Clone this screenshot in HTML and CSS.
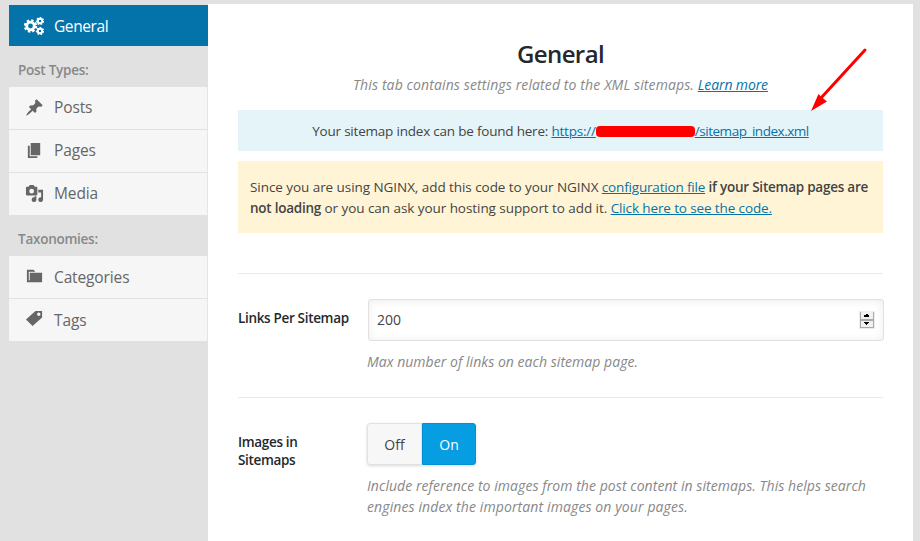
FILE: index.html
```html
<!DOCTYPE html>
<html lang="en">
<head>
<meta charset="utf-8">
<title>Sitemap Settings</title>
<link rel="stylesheet" href="styles.css">
</head>
<body>
<div class="app">
  <nav class="sidebar">
    <a class="tab active">
      <svg class="icon gears" viewBox="0 0 20 18" width="20" height="18" fill="none" stroke="currentColor">
        <circle cx="6.500" cy="9" r="3.800" stroke-width="2.800"/>
        <circle cx="6.500" cy="9" r="5.600" stroke-width="2.200" stroke-dasharray="2.400 1.998"/>
        <circle cx="16" cy="4" r="2.200" stroke-width="2"/>
        <circle cx="16" cy="4" r="3.500" stroke-width="1.300" stroke-dasharray="1.700 1.442"/>
        <circle cx="16" cy="14" r="2.200" stroke-width="2"/>
        <circle cx="16" cy="14" r="3.500" stroke-width="1.300" stroke-dasharray="1.700 1.442"/>
      </svg>
      <span>General</span>
    </a>
    <h2 class="group"><span>Post Types:</span></h2>
    <a class="tab">
      <svg class="icon" viewBox="0 0 20 20" width="20" height="20" fill="currentColor"><path d="M10.44 3.02l1.82-1.82 6.36 6.35-1.83 1.82c-1.05-.68-2.48-.57-3.41.36l-.75.75c-.92.93-1.04 2.35-.35 3.41l-1.83 1.82-2.41-2.41-2.8 2.79c-.42.42-3.38 2.71-3.8 2.29s1.86-3.39 2.28-3.81l2.79-2.79L4.1 9.36l1.83-1.82c1.05.69 2.48.57 3.4-.36l.75-.75c.93-.92 1.05-2.35.36-3.41z"/></svg>
      <span>Posts</span>
    </a>
    <a class="tab">
      <svg class="icon" viewBox="0 0 20 20" width="20" height="20" fill="currentColor"><path d="M6 15V2h10v13H6zm-1 1h8v2H3V5h2v11z"/></svg>
      <span>Pages</span>
    </a>
    <a class="tab">
      <svg class="icon" viewBox="0 0 20 20" width="20" height="20" fill="currentColor"><path fill-rule="evenodd" d="M13 11V4c0-.55-.45-1-1-1h-1.670L9 1H5L3.670 3H2c-.55 0-1 .45-1 1v7c0 .55.45 1 1 1h10c.55 0 1-.45 1-1zM7 5a2.500 2.500 0 1 1 0 5 2.500 2.500 0 0 1 0-5z"/><path d="M14 6h5v10.500a2.500 2.500 0 1 1-2-2.450V9h-3zM10 13h2v3.500a2.500 2.500 0 1 1-2-2.450z"/></svg>
      <span>Media</span>
    </a>
    <h2 class="group second"><span>Taxonomies:</span></h2>
    <a class="tab low">
      <svg class="icon" viewBox="0 0 20 20" width="20" height="20" fill="currentColor"><path d="M5 7h13v10H2V4h7l2 2H4v9h1V7z"/></svg>
      <span>Categories</span>
    </a>
    <a class="tab low">
      <svg class="icon" viewBox="0 0 20 20" width="20" height="20" fill="currentColor"><path fill-rule="evenodd" d="M11 2h7v7L8 18 1 11zm3.500 1.800a1.800 1.800 0 1 0 0 3.600 1.800 1.800 0 0 0 0-3.600z"/></svg>
      <span>Tags</span>
    </a>
  </nav>
  <main class="panel">
    <header>
      <h1>General</h1>
      <p class="intro"><span>This tab contains settings related to the XML sitemaps. <a class="link">Learn more</a></span></p>
    </header>
    <div class="notice info">
      <span class="lead">Your sitemap index can be found here: <a class="link">https://<span class="redacted"></span><span class="path">/sitemap_index.xml</span></a></span>
      <svg class="arrow" width="58" height="66" viewBox="0 0 58 66"><path d="M54 5L10 53" stroke="#f00" stroke-width="3" stroke-linecap="round"/><path d="M0 66L7.500 49 11 52.500 16 56.500z" fill="#f00"/></svg>
    </div>
    <div class="notice warning">
      <span>Since you are using NGINX, add this code to your NGINX <a class="link">configuration file</a> <strong>if your Sitemap pages are</strong></span><br>
      <span><strong>not loading</strong> or you can ask your hosting support to add it. <a class="link wide">Click here to see the code.</a></span>
    </div>
    <section class="row first">
      <div class="label"><span>Links Per Sitemap</span></div>
      <div class="field">
        <div class="number"><span>200</span>
          <svg class="spinner" width="16" height="18" viewBox="0 0 16 18"><path fill="#ececec" d="M0 0h16v18H0z"/><path fill="#aaa" d="M1 1h14v16H1z"/><path fill="#f1f1f1" d="M2 0h12v8H2zM2 10h12v6H2z"/><path d="M7 3h2v1h1v1H5V4h2zM5 5h5v1H5zM5 11h5v1H5zM6 12h3v1H6zM7 13h1v1H7z"/></svg>
        </div>
        <p class="help"><span class="short">Max number of links on each sitemap page.</span></p>
      </div>
    </section>
    <section class="row">
      <div class="label"><span>Images in<br>Sitemaps</span></div>
      <div class="field">
        <div class="toggle"><span class="off">Off</span><span class="on">On</span></div>
        <p class="help"><span class="long">Include reference to images from the post content in sitemaps. This helps search</span><br><span class="last">engines index the important images on your pages.</span></p>
      </div>
    </section>
  </main>
</div>
</body>
</html>
```
FILE: styles.css
```css
* { box-sizing: border-box; }
body { margin: 0; background: #e1e1e1; font: 14px/21px "Open Sans", "Noto Sans", sans-serif; color: #444; overflow: hidden; }
h1, h2, p { margin: 0; font-weight: 400; }
.app { display: flex; height: 541px; padding: 4px 7px 0 9px; }
.sidebar { width: 199px; padding-top: 1px; flex: none; }
.tab { display: flex; align-items: center; height: 43px; padding: 0 0 2px 16px; background: #f6f6f6; color: #666; font-size: 15.5px; letter-spacing: -.13px; border-right: 1px solid #e5e5e5; border-bottom: 1px solid #e1e1e1; white-space: nowrap; }
.tab.active { height: 41px; padding: 1px 0 0 15px; background: #0473aa; color: #fff; border: 0; letter-spacing: -.4px; }
.tab.low span { padding-top: 2px; }
.icon { width: 19px; height: 19px; margin-right: 10px; }
.low .icon { margin-top: -1px; }
.icon.gears { width: 20px; height: 18px; margin-top: -1px; }
.group { height: 41px; padding: 14px 0 0 9px; font-size: 13.5px; line-height: 21px; letter-spacing: -.25px; font-weight: 600; color: #888; }
.group.second { height: 40px; padding-top: 13px; }
.panel { width: 705px; flex: none; background: #fff; padding: 32px 30px 0; }
h1 { font-size: 24px; line-height: 35px; letter-spacing: -.6px; font-weight: 600; color: #23282d; text-align: center; }
.intro { height: 39px; line-height: 28px; text-align: center; font-style: italic; letter-spacing: .12px; color: #888; }
.intro .link { letter-spacing: -.12px; }
.link { color: #0473aa; text-decoration: underline; text-underline-offset: 1px; text-decoration-thickness: 1px; }
span { white-space: nowrap; }
.notice { width: 645px; font-size: 13.5px; letter-spacing: -.06px; }
.info { position: relative; height: 41px; padding-top: 11px; text-align: center; background: #e5f4f9; margin-bottom: 10px; letter-spacing: -.21px; line-height: 20px; }
.redacted { display: inline-block; width: 99px; height: 11px; border-radius: 4px; background: #f00; vertical-align: -1px; }
.path { letter-spacing: -.47px; }
.arrow { position: absolute; left: 573px; top: -65px; }
.warning { height: 72px; padding: 16px 12px; background: #fff5d6; }
.warning .link { letter-spacing: -.18px; }
.warning .wide { letter-spacing: -.12px; }
strong { font-weight: 600; letter-spacing: -.24px; }
.row { display: flex; width: 645px; border-top: 1px solid #ebebeb; height: 124px; padding-top: 25px; }
.row.first { margin-top: 40px; }
.label { width: 129px; flex: none; padding-top: 10px; font-size: 13.5px; letter-spacing: -.33px; font-weight: 600; line-height: 18px; color: #23282d; }
.field { flex: none; width: 517px; }
.number { display: flex; align-items: center; justify-content: space-between; width: 516px; height: 42px; margin-left: 1px; padding: 0 8px 1px 8px; border: 1px solid #e1e1e1; border-radius: 3px; box-shadow: inset 0 1px 8px rgba(0,0,0,.08); }
.help { padding-top: 10px; color: #888; font-style: italic; }
.help .short { letter-spacing: .04px; }
.help .long { letter-spacing: .06px; }
.help .last { letter-spacing: .11px; }
.toggle { display: flex; width: 109px; height: 42px; border-radius: 3px; box-shadow: 0 1px 3px rgba(0,0,0,.15); }
.toggle span { display: flex; align-items: center; justify-content: center; padding-top: 1px; }
.off { width: 55px; background: #f7f7f7; border: 1px solid #e1e1e1; border-radius: 3px 0 0 3px; }
.on { width: 54px; background: #069de3; color: #fff; border: 1px solid #0590d2; border-radius: 0 3px 3px 0; }
```
